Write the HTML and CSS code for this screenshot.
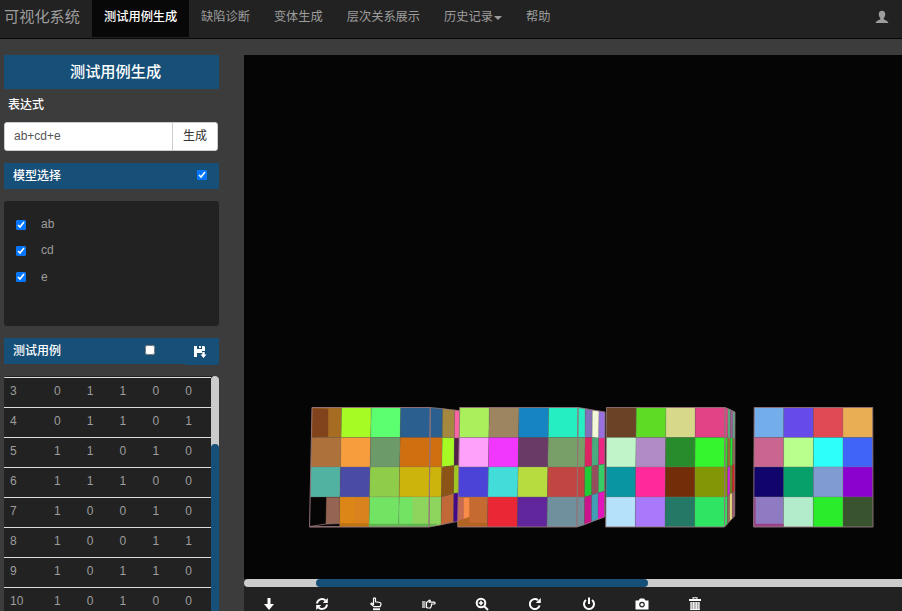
FILE: index.html
```
<!DOCTYPE html>
<html lang="zh-CN">
<head>
<meta charset="utf-8">
<title>可视化系统</title>
<link rel="stylesheet" href="styles.css">
</head>
<body>
<nav class="navbar">
  <a class="brand">可视化系统</a>
  <a class="nav-item active">测试用例生成</a>
  <a class="nav-item">缺陷诊断</a>
  <a class="nav-item">变体生成</a>
  <a class="nav-item">层次关系展示</a>
  <a class="nav-item">历史记录<span class="caret"></span></a>
  <a class="nav-item">帮助</a>
  <svg class="user" width="14" height="14" viewBox="0 0 14 14"><path d="M7 .7C4.800 .7 3.800 2.200 3.800 4.200C3.800 6 4.500 7.300 5.300 8.200V9.200C4 10.200 .7 10.800 .7 13H13.300C13.300 10.800 10 10.200 8.700 9.200V8.200C9.500 7.300 10.200 6 10.200 4.200C10.200 2.200 9.200 .7 7 .7Z"/></svg>
</nav>
<div class="main">
  <aside class="sidebar">
    <h1 class="title">测试用例生成</h1>
    <label class="label">表达式</label>
    <div class="input-group">
      <input class="expr" type="text" value="ab+cd+e">
      <button class="generate">生成</button>
    </div>
    <div class="heading model-heading"><span>模型选择</span><input type="checkbox" checked></div>
    <div class="models">
      <label class="model"><input type="checkbox" checked><span>ab</span></label>
      <label class="model"><input type="checkbox" checked><span>cd</span></label>
      <label class="model"><input type="checkbox" checked><span>e</span></label>
    </div>
    <div class="heading case-heading"><span>测试用例</span><input type="checkbox">
      <button class="save"><svg width="14" height="14" viewBox="0 0 14 14"><path d="M1 1H4V4H9V1H11L12 2V6H9V8H4V12H1Z M6 1H8V3H6Z M9.300 7H11.700V9.500H13.500L10.500 13L7.500 9.500H9.300Z"/></svg></button>
    </div>
    <div class="cases">
      <table class="case-table">
        <tr><td>3</td><td>0</td><td>1</td><td>1</td><td>0</td><td>0</td></tr>
        <tr><td>4</td><td>0</td><td>1</td><td>1</td><td>0</td><td>1</td></tr>
        <tr><td>5</td><td>1</td><td>1</td><td>0</td><td>1</td><td>0</td></tr>
        <tr><td>6</td><td>1</td><td>1</td><td>1</td><td>0</td><td>0</td></tr>
        <tr><td>7</td><td>1</td><td>0</td><td>0</td><td>1</td><td>0</td></tr>
        <tr><td>8</td><td>1</td><td>0</td><td>0</td><td>1</td><td>1</td></tr>
        <tr><td>9</td><td>1</td><td>0</td><td>1</td><td>1</td><td>0</td></tr>
        <tr><td>10</td><td>1</td><td>0</td><td>1</td><td>0</td><td>0</td></tr>
      </table>
      <div class="v-track"><div class="v-thumb"></div></div>
    </div>
  </aside>
  <section class="viewer">
    <svg id="scene" width="658" height="524" viewBox="244 55 658 524"></svg>
    <div class="h-track"><div class="h-thumb"></div></div>
    <div class="tools">
      <span class="tool"><svg viewBox="0 0 14 14"><path d="M5.500 1H8.500V7H12L7 13L2 7H5.500Z"/></svg></span>
      <span class="tool"><svg viewBox="0 0 14 14"><path class="line" d="M2 6.500A5 5 0 0 1 10.500 3.500M12 7.500A5 5 0 0 1 3.500 10.500"/><path d="M12.800 1V6H7.800ZM1.200 13V8H6.200Z"/></svg></span>
      <span class="tool"><svg viewBox="0 0 14 14"><path class="thin" d="M4.500 8V1.500Q5.500 .3 6.500 1.500V4.800L11 5.500Q12.300 6 12 7.500L11 9.700H5L2 7.200Q1.600 6 2.800 6L4.500 7.500"/><path d="M4 11.300H11V13.200H4Z"/></svg></span>
      <span class="tool"><svg viewBox="0 0 14 14"><path class="soft" d="M0 4H3.500V11H0Z"/><path class="thin" d="M4.500 10.500V5.500L7.500 3Q8.500 3 8.200 4.200L7.500 5.200H12.500Q13.800 6 12.500 7H9.500V8.500L8.500 11H6Z"/></svg></span>
      <span class="tool"><svg viewBox="0 0 14 14"><circle class="line" cx="6" cy="6" r="4.300"/><path class="line" d="M9 9L13 13"/><path d="M5.200 3.800H6.800V5.200H8.200V6.800H6.800V8.200H5.200V6.800H3.800V5.200H5.200Z"/></svg></span>
      <span class="tool"><svg viewBox="0 0 14 14"><path class="line" d="M11.600 8.500A5 5 0 1 1 9.900 3.100"/><path d="M12.800 1V6H7.800Z"/></svg></span>
      <span class="tool"><svg viewBox="0 0 14 14"><path class="line" d="M4 3A5 5 0 1 0 10 3"/><path d="M6 .5H8V7H6Z"/></svg></span>
      <span class="tool"><svg viewBox="0 0 14 14"><path fill-rule="evenodd" d="M.5 3.500H3.500L5 1.500H9L10.500 3.500H13.500V12.500H.5ZM7 4.800A2.800 2.800 0 1 0 7 10.400A2.800 2.800 0 1 0 7 4.800Z"/><circle cx="7" cy="7.600" r="1.600"/></svg></span>
      <span class="tool"><svg viewBox="0 0 14 14"><path fill-rule="evenodd" d="M1 2H4.500V.3H9.500V2H13V4H1ZM5.500 1.200V2H8.500V1.200Z"/><path class="soft" d="M2.500 5H11.500V13H2.500Z"/><path class="bars" d="M3 5V13M5.700 5V12M8.300 5V12M11 5V13M2.500 12.600H11.500"/></svg></span>
    </div>
  </section>
</div>
<script src="scene.js"></script>
</body>
</html>
```
FILE: styles.css
```
* { box-sizing: border-box; }
body {
  margin: 0;
  width: 902px;
  height: 611px;
  overflow: hidden;
  background: #3c3c3c;
  color: #9d9d9d;
  font: 12px/17px "Liberation Sans", "Noto Sans CJK SC", sans-serif;
}
.navbar {
  display: flex;
  align-items: flex-start;
  height: 39px;
  background: #222;
  border-bottom: 1px solid #080808;
}
.brand { width: 92px; padding-left: 4px; font-size: 15.2px; line-height: 33px; white-space: nowrap; }
.nav-item { height: 37px; padding: 0 12px; font-size: 12.22px; line-height: 35px; white-space: nowrap; }
.active { width: 97px; background: #080808; color: #fff; font-weight: 500; }
.caret { display: inline-block; margin-left: 1px; vertical-align: middle; border: 4px solid transparent; border-top-color: #9d9d9d; border-bottom: 0; }
.user { margin: 10px 13px 0 auto; fill: #9d9d9d; }
.main { display: flex; height: 572px; padding-top: 16px; }
.sidebar { display: flex; flex-direction: column; width: 215px; margin: 0 25px 0 4px; }
.title { height: 34px; margin: 0; background: #164f78; color: #fff; font-size: 15.2px; font-weight: 500; line-height: 33px; text-align: center; padding-left: 8px; }
.label { height: 33px; padding-left: 4px; line-height: 32px; color: #fff; font-weight: 500; }
.input-group { display: flex; width: 214px; height: 29px; border: 1px solid #ccc; border-radius: 3px; background: #fff; overflow: hidden; }
.expr { width: 167px; padding: 0 9px; border: 0; color: #555; font: inherit; }
.generate { flex: 1; padding: 0; border: 0; border-left: 1px solid #ccc; background: #fff; color: #333; font: inherit; }
.heading { display: flex; align-items: center; height: 26px; padding-left: 9px; background: #164f78; color: #fff; font-weight: 500; }
.model-heading { margin-top: 12px; padding-right: 12px; justify-content: space-between; }
input[type="checkbox"] { width: 10px; height: 10px; margin: 0; accent-color: #0075ff; }
.heading input[type="checkbox"] { margin-bottom: 3px; }
.models { height: 125px; margin-top: 12px; padding: 10px 12px; border-radius: 3px; background: #222; }
.model { display: flex; align-items: center; gap: 15px; height: 26px; }
.model:last-child span { padding-top: 2px; }
.model input[type="checkbox"] { margin-top: 2px; }
.case-heading { margin-top: 12px; }
.case-heading > input[type="checkbox"] { margin-left: 84px; }
.save { align-self: flex-start; width: 35px; height: 27px; margin-left: auto; padding: 0 4px 0 0; border: 0; border-radius: 3px; background: #164f78; }
.save svg { display: block; margin: 1px auto 0; fill: #fff; }
.cases { display: flex; height: 235px; margin-top: 12px; border-radius: 3px 3px 0 0; background: #222; overflow: hidden; }
.case-table { flex: none; width: 207px; height: 240px; margin-top: 1px; border-spacing: 0; table-layout: fixed; }
.case-table tr { height: 30px; }
.case-table td { width: 32.8px; padding: 0 0 2px 7px; border-top: 1px solid #ddd; }
.case-table td:first-child { width: 43px; padding-left: 6px; }
.v-track { width: 8px; border-radius: 4px; background: #ccc; }
.v-thumb { height: 200px; margin-top: 68px; border-radius: 4px; background: #164f78; }
.viewer { width: 658px; background: #222; }
#scene { display: block; background: #050505; }
.h-track { height: 8px; padding-left: 72px; background: #ccc; border-radius: 4px 0 0 4px; }
.h-thumb { width: 332px; height: 8px; border-radius: 4px; background: #164f78; }
.tools { display: flex; height: 24px; padding: 10px 0 0 18px; }
.tool { width: 53.3px; }
.tool svg { display: block; width: 14px; height: 14px; fill: #fff; }
.tool .line { fill: none; stroke: #fff; stroke-width: 2; }
.tool .thin { fill: none; stroke: #fff; stroke-width: 1.2; }
.tool .soft { fill: #aaa; }
.tool .bars { fill: none; stroke: #fff; stroke-width: 1; }
```
FILE: scene.js
```
const scene = document.getElementById('scene');
const rows = [407.5, 437.5, 467, 497, 527];

function shape(points, fill, stroke, width) {
  const p = document.createElementNS('http://www.w3.org/2000/svg', 'polygon');
  p.setAttribute('points', points.map(q => q.join(',')).join(' '));
  p.setAttribute('fill', fill);
  p.setAttribute('stroke', stroke || fill);
  p.setAttribute('stroke-width', width || 0.5);
  scene.appendChild(p);
}

// Column edges run from a top x to a bottom x; side edges carry their own row heights.
function grid(edges, colors) {
  for (let c = 0; c < edges.length - 1; c++) {
    const l = edges[c], r = edges[c + 1];
    const at = (e, i) => [e.t + (e.b - e.t) * i / 4, e.y[i]];
    for (let i = 0; i < 4; i++) {
      shape([at(l, i), at(r, i), at(r, i + 1), at(l, i + 1)], colors[i][c], 'rgba(120,120,110,.35)', 0.7);
    }
  }
}
const e = (t, b, y) => ({ t, b, y: y || rows });

grid([e(430.3, 429), e(442.7, 441, [408.5, 437.5, 467, 497, 525]), e(454.7, 453.5, [410, 438, 465.5, 493.5, 522]), e(459.7, 460, [410.7, 438, 465, 492.5, 521])], [
  ['#2b5f8f', '#a58840', '#f964a3'],
  ['#d06f10', '#a5fb23', '#53204a'],
  ['#ccb40c', '#8b5416', '#a0c820'],
  ['#8dd55d', '#c06838', '#450888']
]);
grid([e(312, 309.7), e(341.7, 339.3), e(371.3, 369), e(400.7, 398.7), e(430.3, 429)], [
  ['#a66c22', '#a5fb23', '#5cff70', '#2b5f8f'],
  ['#ad713c', '#f79d3d', '#6c9a68', '#d06f10'],
  ['#52b2a2', '#494ba5', '#8fcc49', '#ccb40c'],
  ['#050505', '#db8616', '#73e364', '#73e364']
]);
shape([[312.7, 408.5], [328, 409], [328, 436.5], [312.3, 437]], '#80431c');
shape([[326.5, 497.5], [339.5, 497.5], [339.3, 523], [326, 524.5]], '#956452');
shape([[310, 526.5], [326, 524], [340, 523.5], [340, 526.5]], '#050505', '#987174', 0.8);
shape([[355, 498], [369, 498], [368.5, 523.5], [355, 523.5]], '#d9821e');
shape([[340, 523.5], [368.5, 523.5], [368.5, 526.5], [340, 526.5]], '#bf7412');
shape([[412.5, 497.5], [429, 497.5], [429, 524], [412.5, 524]], '#8dd55d');
shape([[369, 524], [437, 524], [428.7, 526.5], [369, 526.5]], '#60b650');
shape([[309.5, 527], [312, 407.5], [430.3, 407.5], [429, 527]], 'none', '#97747a', 0.9);
shape([[430.3, 407.5], [459.5, 410.7], [460, 521], [429, 527]], 'none', '#97747a', 0.7);

grid([e(578, 577), e(585.2, 584.5, [408.5, 437.5, 467, 497, 525]), e(592.3, 591.5, [410, 437.5, 466, 495, 522]), e(599, 598, [411, 438, 465, 493, 519.5]), e(605, 604.5, [412, 438, 464, 491, 517])], [
  ['#25efc2', '#8270bb', '#f2f8d8', '#9870e0'],
  ['#789f68', '#dc2462', '#48ac7e', '#ec2684'],
  ['#c14540', '#20cc35', '#954f5c', '#38cc65'],
  ['#6f909c', '#cc158c', '#409eb5', '#e215bd']
]);
grid([e(459.7, 457.7), e(489.3, 487.5), e(519, 517.3), e(548.7, 547), e(578, 577)], [
  ['#aaf05c', '#9d865f', '#1684c2', '#25efc2'],
  ['#fda1fb', '#f136fe', '#693a66', '#789f68'],
  ['#4b42d7', '#42dcd9', '#b6dc40', '#c14540'],
  ['#c56a30', '#ea2835', '#61259c', '#6f909c']
]);
shape([[458.5, 498], [464, 498], [464, 519], [458, 521]], '#c46b50');
shape([[464, 498], [469, 498], [469, 517], [464, 519]], '#f78b48');
shape([[458, 521], [469, 517.5], [469, 523], [487, 523], [487, 526], [458, 526]], '#b26523');
shape([[457.7, 527], [459.7, 407.5], [578, 407.5], [577, 527]], 'none', '#97747a', 0.8);
shape([[578, 407.5], [605, 412], [604.5, 517], [577, 527]], 'none', '#97747a', 0.7);

grid([e(725, 724.5), e(728, 727.3, [408.5, 438, 467, 496, 524]), e(730.5, 729.7, [409.5, 438, 466, 494, 521]), e(733, 732, [411, 438, 465, 493, 518.5]), e(735, 734.7, [412, 438, 464, 491, 516])], [
  ['#df4686', '#58ab7c', '#a0609a', '#60ab88'],
  ['#35d42c', '#9b6a30', '#20e535', '#8a6a50'],
  ['#829805', '#d020e0', '#6a8020', '#d52525'],
  ['#2ee35f', '#9d6560', '#f2e080', '#985f70']
]);
grid([e(606.5, 605.7), e(636.3, 635.3), e(666, 665), e(695.3, 694.7), e(725, 724.5)], [
  ['#6a4225', '#5edb25', '#d7d889', '#e24286'],
  ['#bff5c9', '#b08bc6', '#298c2c', '#35f52c'],
  ['#0995a1', '#ff299c', '#742d09', '#839706'],
  ['#b5e1fa', '#a979fb', '#247966', '#2fe463']
]);
shape([[605.7, 527], [606.5, 407.5], [725, 407.5], [724.5, 527]], 'none', '#97747a', 0.8);
shape([[725, 407.5], [735, 412], [734.7, 516], [724.5, 527]], 'none', '#97747a', 0.7);

grid([e(754.2, 753.5), e(783.8, 783.5), e(813.4, 813.3), e(843, 843), e(872.7, 873)], [
  ['#73adea', '#674aea', '#df4a54', '#e9ae54'],
  ['#c9658f', '#b9ff8d', '#2dfffb', '#3f64f7'],
  ['#11056c', '#07a06b', '#7f9bd1', '#8b02ce'],
  ['#8f7bc2', '#b2eccb', '#2aec2b', '#39532e']
]);
shape([[754, 498], [755.3, 498], [755.3, 524], [783.3, 524], [783.3, 526.5], [754, 526.5]], '#984184');
shape([[753.7, 527], [754.2, 407.5], [872.7, 407.5], [873, 527]], 'none', '#97747a', 0.8);
```
